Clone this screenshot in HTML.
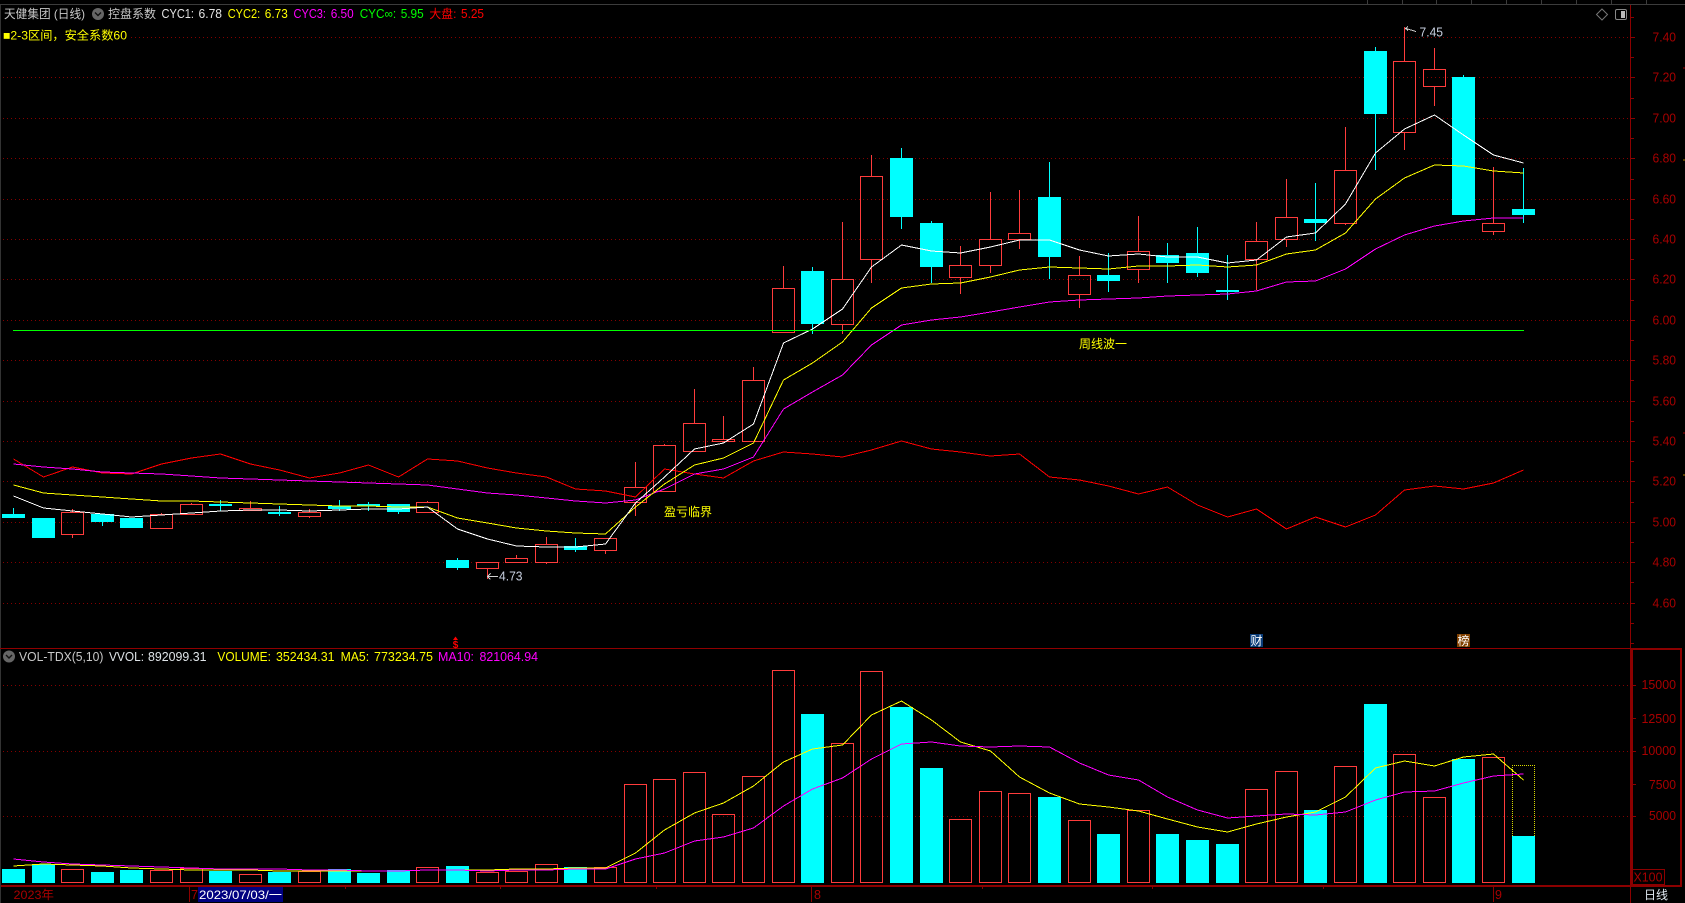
<!DOCTYPE html>
<html lang="zh">
<head>
<meta charset="utf-8">
<title>天健集团 (日线)</title>
<style>
html,body{margin:0;padding:0;background:#000;width:1685px;height:903px;overflow:hidden}
svg{display:block;position:absolute;left:0;top:0}
text{font-family:"Liberation Sans","Noto Sans CJK SC",sans-serif;font-size:12.5px}
.c{font-size:12px}
.ax{fill:#a80000}
</style>
</head>
<body>
<svg width="1685" height="903" viewBox="0 0 1685 903" xmlns="http://www.w3.org/2000/svg">
<rect width="1685" height="903" fill="#000"/>

<!-- top strip and left border -->
<g shape-rendering="crispEdges">
<path d="M0 4.5H1685" stroke="#3c3c3c" fill="none"/>
<path d="M1367.5 0V4M1402.5 0V4M1436.5 0V4M1471.5 0V4M1506.5 0V4M1541.5 0V4M1576.5 0V4M1611.5 0V4M1646.5 0V4" stroke="#3c3c3c" fill="none"/>
<path d="M0.5 5V903" stroke="#333" fill="none"/>

<!-- grid price -->
<path d="M3 37.5H1628M3 77.5H1628M3 118.5H1628M3 158.5H1628M3 199.5H1628M3 239.5H1628M3 279.5H1628M3 320.5H1628M3 360.5H1628M3 401.5H1628M3 441.5H1628M3 481.5H1628M3 522.5H1628M3 562.5H1628M3 603.5H1628" stroke="#850000" stroke-dasharray="1 3" fill="none"/>
<!-- grid vol -->
<path d="M3 685.5H1628M3 751.5H1628M3 816.5H1628" stroke="#850000" stroke-dasharray="1 3" fill="none"/>

<!-- axes -->
<path d="M1630.5 5V903" stroke="#8c0000" fill="none"/>
<path d="M1631 17.5h3M1631 37.5h4M1631 57.5h3M1631 77.5h4M1631 98.5h3M1631 118.5h4M1631 138.5h3M1631 158.5h4M1631 179.5h3M1631 199.5h4M1631 219.5h3M1631 239.5h4M1631 259.5h3M1631 279.5h4M1631 300.5h3M1631 320.5h4M1631 340.5h3M1631 360.5h4M1631 380.5h3M1631 401.5h4M1631 421.5h3M1631 441.5h4M1631 461.5h3M1631 481.5h4M1631 502.5h3M1631 522.5h4M1631 542.5h3M1631 562.5h4M1631 582.5h3M1631 603.5h4M1631 623.5h3M1631 643.5h3" stroke="#8c0000" fill="none"/>
<path d="M1632 685.5h4M1632 718.5h4M1632 751.5h4M1632 784.5h4M1632 816.5h4" stroke="#8c0000" fill="none"/>
<path d="M0 648.5H1631" stroke="#900000" fill="none"/>
<rect x="1631" y="649" width="2" height="237" fill="#8c0000"/>
<rect x="1631" y="648" width="50" height="2" fill="#8c0000"/>
<rect x="1680" y="648" width="2" height="239" fill="#8c0000"/>
<rect x="1" y="885" width="1681" height="2" fill="#8c0000"/>
<rect x="1632.5" y="869.5" width="32" height="15" fill="none" stroke="#8c0000"/>
<path d="M189.5 887V902M811.5 887V902M1493.5 887V902M345.5 887V889M500.5 887V889M656.5 887V889M982.5 887V889M1152.5 887V889M1323.5 887V889" stroke="#8c0000" fill="none"/>
<path d="M1683 68h2M1683 433h2" stroke="#a00000" fill="none"/>
<path d="M1683 160h2M1683 475h2" stroke="#b08000" fill="none"/>

<!-- candles cyan -->
<path fill="none" stroke="#00ffff" d="M13.5 508V514M220.5 500V511M279.5 506V516M339.5 500V511M368.5 502V511M398.5 512V514M102.5 522V526M457.5 558V570M575.5 538V552M812.5 267V334M901.5 148V229M931.5 221V283M1049.5 162V279M1108.5 253V292M1167.5 243V283M1197.5 227V277M1227.5 255V300M1315.5 183V241M1375.5 47V170M1463.5 75V77M1523.5 168V223"/>
<path fill="#00ffff" d="M2 514h23v4h-23zM32 518h23v20h-23zM91 514h23v8h-23zM120 518h23v10h-23zM209 504h23v2h-23zM268 512h23v2h-23zM328 506h23v3h-23zM357 504h23v2h-23zM387 504h23v8h-23zM446 560h23v8h-23zM564 546h23v4h-23zM801 271h23v53h-23zM890 158h23v59h-23zM920 223h23v44h-23zM1038 197h23v60h-23zM1097 275h23v6h-23zM1156 255h23v8h-23zM1186 253h23v20h-23zM1216 290h23v2h-23zM1304 219h23v4h-23zM1364 51h23v63h-23zM1452 77h23v138h-23zM1512 209h23v6h-23z"/>

<!-- candles red -->
<path fill="none" stroke="#ff3c3c" d="
M72.5 509V512M72.5 535V538M61.5 512.5h22v22h-22z
M161.5 513V514M150.5 514.5h22v14h-22z
M191.5 503V504M180.5 504.5h22v10h-22z
M250.5 501V508M239.5 508.5h22v2h-22z
M309.5 509V512M309.5 517V518M298.5 512.5h22v4h-22z
M427.5 501V502M416.5 502.5h22v10h-22z
M487.5 569V579M476.5 562.5h22v6h-22z
M516.5 555V558M505.5 558.5h22v4h-22z
M546.5 537V544M546.5 563V564M535.5 544.5h22v18h-22z
M605.5 551V554M594.5 538.5h22v12h-22z
M635.5 462V487M635.5 503V516M624.5 487.5h22v15h-22z
M664.5 444V445M653.5 445.5h22v46h-22z
M694.5 389V423M683.5 423.5h22v28h-22z
M723.5 416V439M712.5 439.5h22v2h-22z
M753.5 367V380M742.5 380.5h22v61h-22z
M783.5 266V288M772.5 288.5h22v44h-22z
M842.5 222V279M842.5 325V334M831.5 279.5h22v45h-22z
M871.5 155V176M871.5 260V283M860.5 176.5h22v83h-22z
M960.5 246V265M960.5 278V294M949.5 265.5h22v12h-22z
M990.5 192V239M990.5 266V273M979.5 239.5h22v26h-22z
M1019.5 190V233M1019.5 240V249M1008.5 233.5h22v6h-22z
M1079.5 256V275M1079.5 295V308M1068.5 275.5h22v19h-22z
M1138.5 216V251M1138.5 270V283M1127.5 251.5h22v18h-22z
M1256.5 222V241M1256.5 260V290M1245.5 241.5h22v18h-22z
M1286.5 179V217M1286.5 240V247M1275.5 217.5h22v22h-22z
M1345.5 127V170M1345.5 224V225M1334.5 170.5h22v53h-22z
M1404.5 27V61M1404.5 133V150M1393.5 61.5h22v71h-22z
M1434.5 48V69M1434.5 87V106M1423.5 69.5h22v17h-22z
M1493.5 167V223M1493.5 232V235M1482.5 223.5h22v8h-22z"/>

<!-- dapan red -->
<polyline fill="none" stroke="#ff0000" points="13.5,459 43.5,477 72.5,467 102.5,473 131.5,474 161.5,464 191.5,458 220.5,454 250.5,464 279.5,470 309.5,478 339.5,473 368.5,465 398.5,477 427.5,459 457.5,461 487.5,468 516.5,473 546.5,477 575.5,489 605.5,491 635.5,497 664.5,469 694.5,474 723.5,478 753.5,461 783.5,452 812.5,454 842.5,457 871.5,450 901.5,441 931.5,449 960.5,452 990.5,456 1019.5,454 1049.5,477 1079.5,480 1108.5,486 1138.5,494 1167.5,487 1197.5,505 1227.5,517 1256.5,509 1286.5,529 1315.5,517 1345.5,527 1375.5,515 1404.5,490 1434.5,486 1463.5,489 1493.5,483 1523.5,470"/>
<!-- magenta -->
<polyline fill="none" stroke="#ff00ff" points="13.5,464 43.5,467 72.5,469 102.5,472 131.5,473 161.5,474 191.5,476 220.5,478 250.5,479 279.5,480 309.5,481 339.5,482 368.5,483 398.5,484 427.5,485 457.5,489 487.5,493 516.5,495 546.5,498 575.5,501 605.5,503 635.5,500 664.5,489 694.5,474 723.5,469 753.5,457 783.5,409 812.5,392 842.5,375 871.5,345 901.5,325 931.5,320 960.5,317 990.5,312 1019.5,307 1049.5,302 1079.5,300 1108.5,299 1138.5,298 1167.5,296 1197.5,295 1227.5,294 1256.5,291 1286.5,282 1315.5,281 1345.5,269 1375.5,249 1404.5,235 1434.5,226 1463.5,221 1493.5,218 1523.5,218"/>
<!-- yellow -->
<polyline fill="none" stroke="#ffff00" points="13.5,485 43.5,493 72.5,495 102.5,497 131.5,499 161.5,501 191.5,501 220.5,502 250.5,503 279.5,504 309.5,505 339.5,506 368.5,506 398.5,507 427.5,507 457.5,518 487.5,523 516.5,528 546.5,531 575.5,533 605.5,534 635.5,507 664.5,484 694.5,465 723.5,458 753.5,443 783.5,380 812.5,363 842.5,342 871.5,308 901.5,288 931.5,284 960.5,283 990.5,277 1019.5,270 1049.5,267 1079.5,268 1108.5,269 1138.5,266 1167.5,266 1197.5,265 1227.5,267 1256.5,265 1286.5,254 1315.5,250 1345.5,233 1375.5,199 1404.5,178 1434.5,165 1463.5,166 1493.5,171 1523.5,173"/>
<!-- white -->
<polyline fill="none" stroke="#ffffff" points="13.5,496 43.5,508 72.5,511 102.5,514 131.5,517 161.5,515 191.5,513 220.5,511 250.5,510 279.5,510 309.5,511 339.5,510 368.5,509 398.5,509 427.5,507 457.5,529 487.5,539 516.5,546 546.5,547 575.5,547 605.5,544 635.5,503 664.5,477 694.5,449 723.5,443 753.5,424 783.5,343 812.5,329 842.5,309 871.5,267 901.5,245 931.5,251 960.5,253 990.5,247 1019.5,240 1049.5,240 1079.5,250 1108.5,256 1138.5,254 1167.5,257 1197.5,257 1227.5,263 1256.5,260 1286.5,237 1315.5,233 1345.5,204 1375.5,153 1404.5,129 1434.5,115 1463.5,135 1493.5,155 1523.5,163"/>
<!-- horizontal -->
<path d="M13 330.5H1524" stroke="#00ff00" fill="none"/>

<!-- volume cyan -->
<path fill="#00ffff" d="M2 869h23v14h-23zM32 864h23v19h-23zM91 872h23v11h-23zM120 870h23v13h-23zM209 871h23v12h-23zM268 872h23v11h-23zM328 869h23v14h-23zM357 873h23v10h-23zM387 870h23v13h-23zM446 866h23v17h-23zM564 867h23v16h-23zM801 714h23v169h-23zM890 707h23v176h-23zM920 768h23v115h-23zM1038 797h23v86h-23zM1097 834h23v49h-23zM1156 834h23v49h-23zM1186 840h23v43h-23zM1216 844h23v39h-23zM1304 810h23v73h-23zM1364 704h23v179h-23zM1452 759h23v124h-23zM1512 836h23v47h-23z"/>
<!-- volume red -->
<path fill="none" stroke="#ff3c3c" d="M61.5 869.5h22v13h-22zM150.5 870.5h22v12h-22zM180.5 868.5h22v14h-22zM239.5 874.5h22v8h-22zM298.5 871.5h22v11h-22zM416.5 867.5h22v15h-22zM476.5 872.5h22v10h-22zM505.5 871.5h22v11h-22zM535.5 864.5h22v18h-22zM594.5 867.5h22v15h-22zM624.5 784.5h22v98h-22zM653.5 779.5h22v103h-22zM683.5 772.5h22v110h-22zM712.5 814.5h22v68h-22zM742.5 776.5h22v106h-22zM772.5 670.5h22v212h-22zM831.5 743.5h22v139h-22zM860.5 671.5h22v211h-22zM949.5 819.5h22v63h-22zM979.5 791.5h22v91h-22zM1008.5 793.5h22v89h-22zM1068.5 820.5h22v62h-22zM1127.5 810.5h22v72h-22zM1245.5 789.5h22v93h-22zM1275.5 771.5h22v111h-22zM1334.5 766.5h22v116h-22zM1393.5 754.5h22v128h-22zM1423.5 797.5h22v85h-22zM1482.5 757.5h22v125h-22z"/>
<!-- dotted today box -->
<path d="M1512.5 836V765.5H1534.5V836" fill="none" stroke="#d8d800" stroke-dasharray="1 1"/>
<!-- vol yellow -->
<polyline fill="none" stroke="#ffff00" points="13.5,866 43.5,864 72.5,865 102.5,866 131.5,868 161.5,869 191.5,870 220.5,870 250.5,870 279.5,871 309.5,871 339.5,871 368.5,871 398.5,871 427.5,870 457.5,870 487.5,870 516.5,869 546.5,869 575.5,868 605.5,868 635.5,853 664.5,830 694.5,813 723.5,803 753.5,786 783.5,762 812.5,749 842.5,745 871.5,715 901.5,701 931.5,720 960.5,742 990.5,751 1019.5,777 1049.5,793 1079.5,804 1108.5,807 1138.5,811 1167.5,819 1197.5,827 1227.5,832 1256.5,824 1286.5,817 1315.5,812 1345.5,797 1375.5,768 1404.5,761 1434.5,766 1463.5,757 1493.5,754 1523.5,780"/>
<!-- vol magenta -->
<polyline fill="none" stroke="#ff00ff" points="13.5,859 43.5,862 72.5,864 102.5,865 131.5,866 161.5,867 191.5,868 220.5,869 250.5,869 279.5,869 309.5,870 339.5,870 368.5,871 398.5,871 427.5,870 457.5,870 487.5,871 516.5,870 546.5,870 575.5,869 605.5,869 635.5,859 664.5,853 694.5,841 723.5,837 753.5,828 783.5,806 812.5,789 842.5,778 871.5,759 901.5,744 931.5,742 960.5,746 990.5,747 1019.5,746 1049.5,747 1079.5,763 1108.5,775 1138.5,780 1167.5,797 1197.5,810 1227.5,818 1256.5,816 1286.5,814 1315.5,815 1345.5,812 1375.5,800 1404.5,792 1434.5,791 1463.5,783 1493.5,776 1523.5,774"/>

<!-- high/low arrows -->
<path d="M498 576.5H487.5M490.5 573.5L487.5 576.5L490.5 579.5" fill="none" stroke="#d0d0d0"/>
<path d="M1416 31.5L1406 28.5M1408 26.5L1405.5 28.5L1408 30.5" fill="none" stroke="#d0d0d0"/>
</g>

<!-- legend cover -->
<rect x="2" y="27" width="126" height="16" fill="#000"/>
<!-- header -->
<text class="c" x="4" y="18" fill="#c8c8c8" textLength="81" lengthAdjust="spacingAndGlyphs">天健集团 (日线)</text>
<circle cx="98" cy="14" r="6" fill="#666"/>
<path d="M95 12.5L98 15.5L101 12.5" fill="none" stroke="#111" stroke-width="1.4"/>
<text class="c" x="108" y="18" fill="#c8c8c8" textLength="48">控盘系数</text>
<text x="161.5" y="18" fill="#e4e4e4" textLength="32.5" lengthAdjust="spacingAndGlyphs">CYC1:</text>
<text x="198.5" y="18" fill="#e4e4e4" textLength="23.5" lengthAdjust="spacingAndGlyphs">6.78</text>
<text x="227.7" y="18" fill="#ffff00" textLength="32.5" lengthAdjust="spacingAndGlyphs">CYC2:</text>
<text x="264.8" y="18" fill="#ffff00" textLength="23" lengthAdjust="spacingAndGlyphs">6.73</text>
<text x="293.5" y="18" fill="#ff00ff" textLength="32.5" lengthAdjust="spacingAndGlyphs">CYC3:</text>
<text x="330.7" y="18" fill="#ff00ff" textLength="23" lengthAdjust="spacingAndGlyphs">6.50</text>
<text x="359.7" y="18" fill="#00ff00" textLength="36.5" lengthAdjust="spacingAndGlyphs">CYC∞:</text>
<text x="400.7" y="18" fill="#00ff00" textLength="23" lengthAdjust="spacingAndGlyphs">5.95</text>
<text class="c" x="429.4" y="18" fill="#ff0000" textLength="27" lengthAdjust="spacingAndGlyphs">大盘:</text>
<text x="461" y="18" fill="#ff0000" textLength="23" lengthAdjust="spacingAndGlyphs">5.25</text>
<text class="c" x="3" y="39.5" fill="#ffff00" textLength="124" lengthAdjust="spacingAndGlyphs">■2-3区间，安全系数60</text>

<!-- right top icons -->
<path d="M1602 9L1607.5 14.5L1602 20L1596.5 14.5Z" fill="none" stroke="#777"/>
<rect x="1615.5" y="9.5" width="11" height="10" rx="1.5" fill="none" stroke="#888"/>
<rect x="1621" y="11" width="4" height="7" fill="#bbb"/>

<!-- price labels -->
<g class="ax" text-anchor="start">
<text x="1652.5" y="41.5" textLength="23.5" lengthAdjust="spacingAndGlyphs">7.40</text>
<text x="1652.5" y="81.5" textLength="23.5" lengthAdjust="spacingAndGlyphs">7.20</text>
<text x="1652.5" y="122.5" textLength="23.5" lengthAdjust="spacingAndGlyphs">7.00</text>
<text x="1652.5" y="162.5" textLength="23.5" lengthAdjust="spacingAndGlyphs">6.80</text>
<text x="1652.5" y="203.5" textLength="23.5" lengthAdjust="spacingAndGlyphs">6.60</text>
<text x="1652.5" y="243.5" textLength="23.5" lengthAdjust="spacingAndGlyphs">6.40</text>
<text x="1652.5" y="283.5" textLength="23.5" lengthAdjust="spacingAndGlyphs">6.20</text>
<text x="1652.5" y="324.5" textLength="23.5" lengthAdjust="spacingAndGlyphs">6.00</text>
<text x="1652.5" y="364.5" textLength="23.5" lengthAdjust="spacingAndGlyphs">5.80</text>
<text x="1652.5" y="405.5" textLength="23.5" lengthAdjust="spacingAndGlyphs">5.60</text>
<text x="1652.5" y="445.5" textLength="23.5" lengthAdjust="spacingAndGlyphs">5.40</text>
<text x="1652.5" y="485.5" textLength="23.5" lengthAdjust="spacingAndGlyphs">5.20</text>
<text x="1652.5" y="526.5" textLength="23.5" lengthAdjust="spacingAndGlyphs">5.00</text>
<text x="1652.5" y="566.5" textLength="23.5" lengthAdjust="spacingAndGlyphs">4.80</text>
<text x="1652.5" y="607.5" textLength="23.5" lengthAdjust="spacingAndGlyphs">4.60</text>
<text x="1641.5" y="689" textLength="34.5" lengthAdjust="spacingAndGlyphs">15000</text>
<text x="1641.5" y="723" textLength="34.5" lengthAdjust="spacingAndGlyphs">12500</text>
<text x="1641.5" y="755" textLength="34.5" lengthAdjust="spacingAndGlyphs">10000</text>
<text x="1649" y="789" textLength="27" lengthAdjust="spacingAndGlyphs">7500</text>
<text x="1649" y="820" textLength="27" lengthAdjust="spacingAndGlyphs">5000</text>
<text x="1633.5" y="881.5" textLength="29" lengthAdjust="spacingAndGlyphs">X100</text>
<text class="c" x="13.5" y="899" textLength="40.5" lengthAdjust="spacingAndGlyphs">2023年</text>
<text x="191" y="899">7</text>
<text x="814" y="899">8</text>
<text x="1495" y="899">9</text>
</g>

<!-- date cursor -->
<rect x="198" y="887" width="85" height="15" fill="#000080"/>
<text class="c" x="199" y="899" fill="#fff" textLength="83" lengthAdjust="spacingAndGlyphs">2023/07/03/一</text>
<text class="c" x="1644" y="899" fill="#dfe8f0" textLength="24">日线</text>

<!-- annotations -->
<text x="499" y="580.5" fill="#c8d0e0" textLength="23.5" lengthAdjust="spacingAndGlyphs">4.73</text>
<text x="1419.5" y="36.5" fill="#c8d0e0" textLength="23.5" lengthAdjust="spacingAndGlyphs">7.45</text>
<text class="c" x="664" y="516" fill="#ffff00" textLength="48">盈亏临界</text>
<text class="c" x="1079" y="348" fill="#ffff00" textLength="48">周线波一</text>

<!-- markers -->
<path d="M455.5 636.5L453 640H458Z" fill="#ff0000"/>
<text x="455.5" y="648" fill="#ff0000" text-anchor="middle" style="font-size:10px;font-weight:bold">$</text>
<rect x="1250" y="634" width="13" height="13" fill="#0a3c78"/>
<text class="c" x="1250.5" y="645" fill="#fff">财</text>
<rect x="1457" y="634" width="13" height="13" fill="#804000"/>
<text class="c" x="1457.5" y="645" fill="#fff">榜</text>

<!-- volume legend -->
<circle cx="9" cy="656.5" r="6" fill="#666"/>
<path d="M6 655L9 658L12 655" fill="none" stroke="#111" stroke-width="1.4"/>
<text x="19" y="661" fill="#c8c8c8" textLength="84.5" lengthAdjust="spacingAndGlyphs">VOL-TDX(5,10)</text>
<text x="109" y="661" fill="#dfe4e8" textLength="35" lengthAdjust="spacingAndGlyphs">VVOL:</text>
<text x="148" y="661" fill="#dfe4e8" textLength="58.5" lengthAdjust="spacingAndGlyphs">892099.31</text>
<text x="217.4" y="661" fill="#ffff00" textLength="53.5" lengthAdjust="spacingAndGlyphs">VOLUME:</text>
<text x="276" y="661" fill="#ffff00" textLength="58.5" lengthAdjust="spacingAndGlyphs">352434.31</text>
<text x="340.6" y="661" fill="#ffff00" textLength="28.5" lengthAdjust="spacingAndGlyphs">MA5:</text>
<text x="374" y="661" fill="#ffff00" textLength="59" lengthAdjust="spacingAndGlyphs">773234.75</text>
<text x="438" y="661" fill="#ff00ff" textLength="36" lengthAdjust="spacingAndGlyphs">MA10:</text>
<text x="479.5" y="661" fill="#ff00ff" textLength="58.5" lengthAdjust="spacingAndGlyphs">821064.94</text>
</svg>
</body>
</html>
